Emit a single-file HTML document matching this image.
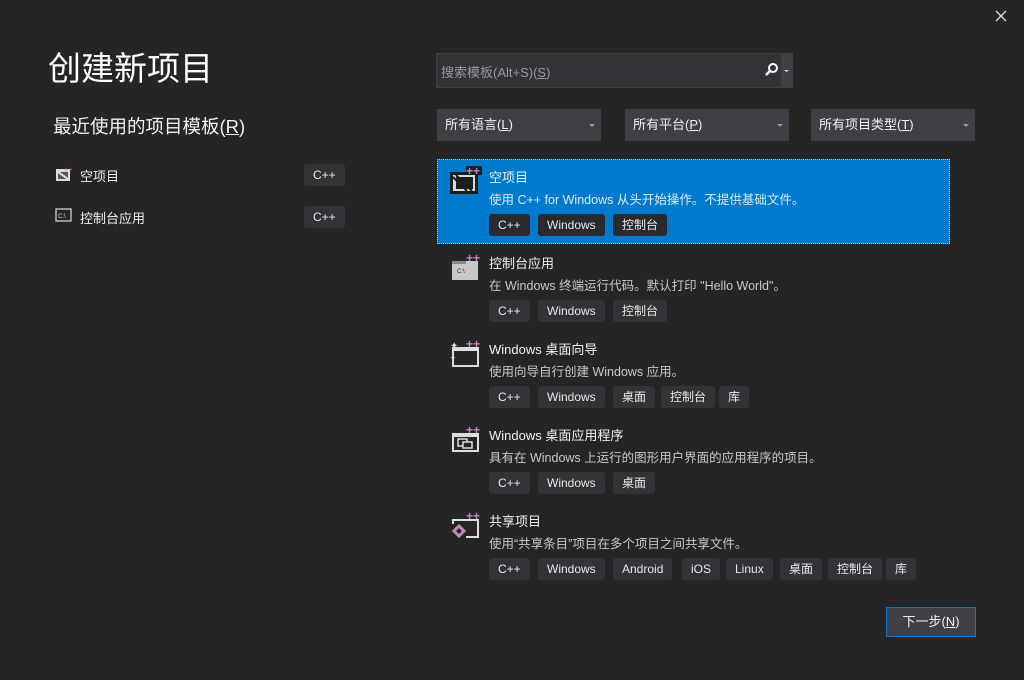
<!DOCTYPE html>
<html><head><meta charset="utf-8"><style>
*{margin:0;padding:0;box-sizing:border-box}
body{width:1024px;height:680px;background:#252526;color:#f1f1f1;font-family:"Liberation Sans","Noto Sans CJK SC",sans-serif;position:relative;overflow:hidden;font-size:12px}
.a{position:absolute}
.tag{position:absolute;height:22px;line-height:22px;background:#333337;border-radius:3px;padding:0 9px;font-size:12px;color:#e8e8e8}
.sel .tag{background:#2a2a2e}
.dd{position:absolute;top:109px;height:32px;background:#3f3f46;font-size:13px;line-height:32px;padding-left:8px;color:#f1f1f1}
.dd:after{content:"";position:absolute;right:6px;top:15px;border:3px solid transparent;border-top:3px solid #999}
.t{position:absolute;left:489px;font-size:13px;color:#f1f1f1}
.d{position:absolute;left:489px;font-size:12.5px;color:#c8c8c8}
u{text-decoration:underline}
</style></head><body>
<svg class="a" style="left:995px;top:10px" width="12" height="12"><path d="M1 1 L11 11 M11 1 L1 11" stroke="#ddd" stroke-width="1.3"/></svg>
<div class="a" style="left:48px;top:42px;font-size:33px;color:#fff">创建新项目</div>
<div class="a" style="left:53px;top:113px;font-size:18.5px;color:#f1f1f1">最近使用的项目模板(<u>R</u>)</div>

<svg class="a" style="left:55px;top:166px" width="18" height="16"><rect x="1" y="3" width="14" height="12" fill="#ddd"/><rect x="3" y="6" width="10" height="7" fill="#555"/><path d="M3 6 L13 13" stroke="#ddd" stroke-width="2"/><text x="9" y="6" font-size="7" fill="#c586c0">++</text></svg>
<div class="a" style="left:80px;top:166px;font-size:13px">空项目</div>
<div class="tag" style="left:304px;top:164px">C++</div>
<svg class="a" style="left:55px;top:208px" width="18" height="14"><rect x="1" y="1" width="15" height="12" fill="none" stroke="#ddd" stroke-width="1.2"/><text x="3" y="10" font-size="6" fill="#ddd">C:\</text></svg>
<div class="a" style="left:80px;top:208px;font-size:13px">控制台应用</div>
<div class="tag" style="left:304px;top:206px">C++</div>

<div class="a" style="left:436px;top:53px;width:357px;height:35px;background:#333337;border:1px solid #3f3f46"></div>
<div class="a" style="left:441px;top:62px;font-size:13px;color:#999">搜索模板(Alt+S)(<u>S</u>)</div>
<div class="a" style="left:781px;top:54px;width:11px;height:33px;background:#3f3f46"></div>
<svg class="a" style="left:764px;top:62px" width="28" height="16"><circle cx="9" cy="6" r="4" fill="none" stroke="#fff" stroke-width="2"/><path d="M6 9 L2 13" stroke="#fff" stroke-width="2.5"/><path d="M20 8 h5 l-2.5 2z" fill="#ddd"/></svg>

<div class="dd" style="left:437px;width:164px">所有语言(<u>L</u>)</div>
<div class="dd" style="left:625px;width:164px">所有平台(<u>P</u>)</div>
<div class="dd" style="left:811px;width:164px">所有项目类型(<u>T</u>)</div>

<div class="a sel" style="left:437px;top:159px;width:513px;height:85px;background:#007acc;border:1px dotted #9cc9ee"></div>
<div class="sel">
<svg class="a" style="left:450px;top:166px" width="32" height="30"><rect x="0" y="6" width="28" height="22" fill="#1e1e1e"/><rect x="3" y="9" width="22" height="16" fill="#dcdcdc"/><rect x="6" y="11" width="17" height="12" fill="#1e1e1e"/><path d="M3 11 L17 25 M6 9 L22 25" stroke="#1e1e1e" stroke-width="2"/><rect x="16" y="0" width="16" height="9" fill="#1e1e1e"/><text x="16" y="9" font-size="12" font-weight="bold" fill="#c586c0">++</text></svg>
<div class="t" style="top:167px">空项目</div>
<div class="d" style="top:189px;color:#dfe9f5">使用 C++ for Windows 从头开始操作。不提供基础文件。</div>
<div class="tag" style="left:489px;top:214px">C++</div><div class="tag" style="left:538px;top:214px">Windows</div><div class="tag" style="left:613px;top:214px">控制台</div>
</div>

<svg class="a" style="left:450px;top:252px" width="32" height="30"><rect x="2" y="9" width="26" height="19" fill="#c8c8c8"/><rect x="2" y="9" width="14" height="3" fill="#888"/><text x="7" y="21" font-size="6" fill="#222">C:\</text><text x="16" y="10" font-size="12" font-weight="bold" fill="#c586c0">++</text></svg>
<div class="t" style="top:253px">控制台应用</div>
<div class="d" style="top:275px">在 Windows 终端运行代码。默认打印 "Hello World"。</div>
<div class="tag" style="left:489px;top:300px">C++</div><div class="tag" style="left:538px;top:300px">Windows</div><div class="tag" style="left:613px;top:300px">控制台</div>

<svg class="a" style="left:450px;top:338px" width="32" height="30"><rect x="3" y="10" width="25" height="18" fill="none" stroke="#ddd" stroke-width="2"/><rect x="3" y="10" width="25" height="3" fill="#ddd"/><text x="0" y="11" font-size="10" fill="#ddd">✦</text><text x="0" y="22" font-size="7" fill="#ddd">✦</text><text x="16" y="10" font-size="12" font-weight="bold" fill="#c586c0">++</text></svg>
<div class="t" style="top:339px">Windows 桌面向导</div>
<div class="d" style="top:361px">使用向导自行创建 Windows 应用。</div>
<div class="tag" style="left:489px;top:386px">C++</div><div class="tag" style="left:538px;top:386px">Windows</div><div class="tag" style="left:613px;top:386px">桌面</div><div class="tag" style="left:661px;top:386px">控制台</div><div class="tag" style="left:719px;top:386px">库</div>

<svg class="a" style="left:450px;top:424px" width="32" height="30"><rect x="3" y="10" width="25" height="17" fill="none" stroke="#ddd" stroke-width="2"/><rect x="3" y="10" width="25" height="3" fill="#ddd"/><rect x="8" y="15" width="9" height="7" fill="none" stroke="#ddd" stroke-width="1.5"/><rect x="13" y="18" width="9" height="6" fill="#252526" stroke="#ddd" stroke-width="1.5"/><text x="16" y="10" font-size="12" font-weight="bold" fill="#c586c0">++</text></svg>
<div class="t" style="top:425px">Windows 桌面应用程序</div>
<div class="d" style="top:447px">具有在 Windows 上运行的图形用户界面的应用程序的项目。</div>
<div class="tag" style="left:489px;top:472px">C++</div><div class="tag" style="left:538px;top:472px">Windows</div><div class="tag" style="left:613px;top:472px">桌面</div>

<svg class="a" style="left:450px;top:510px" width="32" height="32"><path d="M3 14 v-4 h25 v17 h-12" fill="none" stroke="#ddd" stroke-width="2"/><path d="M9 16 l5 5 -5 5 -5 -5z" fill="none" stroke="#c586c0" stroke-width="3"/><text x="16" y="10" font-size="12" font-weight="bold" fill="#c586c0">++</text></svg>
<div class="t" style="top:511px">共享项目</div>
<div class="d" style="top:533px">使用“共享条目”项目在多个项目之间共享文件。</div>
<div class="tag" style="left:489px;top:558px">C++</div><div class="tag" style="left:538px;top:558px">Windows</div><div class="tag" style="left:613px;top:558px">Android</div><div class="tag" style="left:682px;top:558px">iOS</div><div class="tag" style="left:726px;top:558px">Linux</div><div class="tag" style="left:780px;top:558px">桌面</div><div class="tag" style="left:828px;top:558px">控制台</div><div class="tag" style="left:886px;top:558px">库</div>

<div class="a" style="left:886px;top:607px;width:90px;height:30px;background:#3f3f46;border:1px solid #007acc;text-align:center;line-height:28px;font-size:13px">下一步(<u>N</u>)</div>
</body></html>
